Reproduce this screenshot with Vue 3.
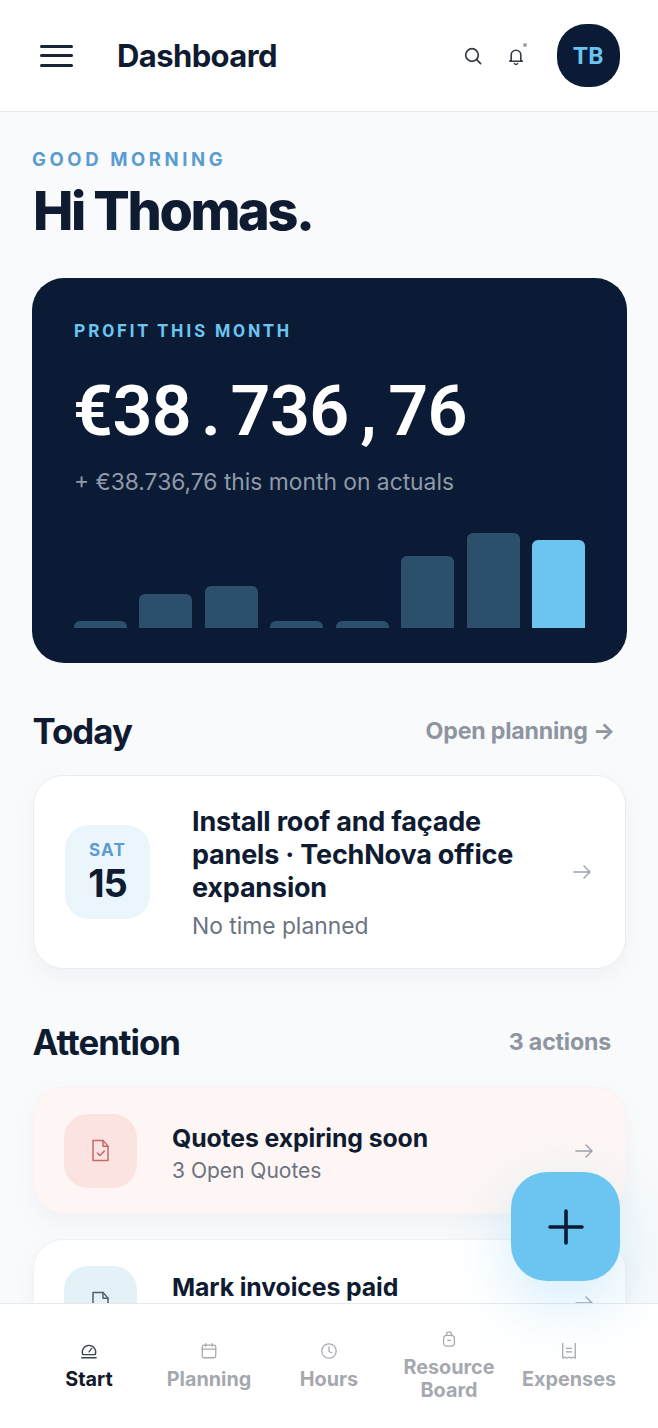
<script setup>
const amount = '€38.736,76'.split('')
const bars = [
  { h: 7 }, { h: 34 }, { h: 42 }, { h: 7 }, { h: 7 }, { h: 72 }, { h: 95 }, { h: 88, on: true }
]
</script>

<template>
  <div class="app">
    <header class="top">
      <button class="burger" aria-label="Menu"><i></i><i></i><i></i></button>
      <h1 class="title">Dashboard</h1>
      <div class="top-actions">
        <svg class="ic-search" viewBox="0 0 20 20" fill="none" stroke="#343b46" stroke-width="1.7" stroke-linecap="round">
          <circle cx="9" cy="9" r="6.3" /><path d="M13.7 13.7 17.6 17.6" />
        </svg>
        <span class="bell">
          <svg viewBox="0 0 20 20" fill="none" stroke="#343b46" stroke-width="1.6" stroke-linecap="round" stroke-linejoin="round">
            <path d="M5.2 14.2V9a4.8 4.8 0 0 1 9.6 0v5.2l1.4 1H3.800z" /><path d="M8.4 17.5a1.8 1.8 0 0 0 3.2 0" />
          </svg>
          <i class="dot"></i>
        </span>
        <div class="avatar">TB</div>
      </div>
    </header>

    <main class="main">
      <p class="eyebrow">GOOD MORNING</p>
      <h2 class="hello">Hi Thomas.</h2>

      <section class="profit">
        <p class="profit-label">PROFIT THIS MONTH</p>
        <p class="amount"><span v-for="(c, i) in amount" :key="i" class="ch">{{ c }}</span></p>
        <p class="profit-sub">+ €38.736,76 this month on actuals</p>
        <div class="chart">
          <span v-for="(b, i) in bars" :key="i" class="bar" :class="{ on: b.on }" :style="{ height: b.h + 'px' }"></span>
        </div>
      </section>

      <div class="sec-head first">
        <h3>Today</h3>
        <span class="sec-link link-plan">Open planning →</span>
      </div>
      <article class="card today">
        <div class="date"><span class="dow">SAT</span><span class="day">15</span></div>
        <div class="today-body">
          <div class="today-title">Install roof and façade panels · TechNova office expansion</div>
          <div class="today-sub">No time planned</div>
        </div>
        <svg class="arrow" viewBox="0 0 20 20" fill="none" stroke="#9aa1ab" stroke-width="1.4" stroke-linecap="round" stroke-linejoin="round">
          <path d="M2 10h16M12 4l6 6-6 6" />
        </svg>
      </article>

      <div class="sec-head second">
        <h3>Attention</h3>
        <span class="sec-link link-act">3 actions</span>
      </div>
      <article class="card action red">
        <div class="a-icon">
          <svg viewBox="0 0 20 20" fill="none" stroke="#c4696a" stroke-width="1.2" stroke-linecap="round" stroke-linejoin="round">
            <path d="M4 2h8l4 4.500V18H4z" /><path d="M12 2v4.500h4" /><path d="M7.500 12l2 2 3.500-3.500" />
          </svg>
        </div>
        <div class="a-body">
          <div class="a-title">Quotes expiring soon</div>
          <div class="a-sub">3 Open Quotes</div>
        </div>
        <svg class="arrow" viewBox="0 0 20 20" fill="none" stroke="#9aa1ab" stroke-width="1.4" stroke-linecap="round" stroke-linejoin="round">
          <path d="M2 10h16M12 4l6 6-6 6" />
        </svg>
      </article>
      <article class="card action blue">
        <div class="a-icon">
          <svg viewBox="0 0 20 20" fill="none" stroke="#51606f" stroke-width="1.2" stroke-linecap="round" stroke-linejoin="round">
            <path d="M4 2h8l4 4.500V18H4z" /><path d="M12 2v4.500h4" /><path d="M7 11h6M7 14h6" />
          </svg>
        </div>
        <div class="a-body">
          <div class="a-title">Mark invoices paid</div>
        </div>
        <svg class="arrow" viewBox="0 0 20 20" fill="none" stroke="#9aa1ab" stroke-width="1.4" stroke-linecap="round" stroke-linejoin="round">
          <path d="M2 10h16M12 4l6 6-6 6" />
        </svg>
      </article>
    </main>

    <nav class="nav">
      <div class="nav-item active">
        <svg viewBox="0 0 20 20" fill="none" stroke="#3a4350" stroke-width="1.4" stroke-linecap="round" stroke-linejoin="round">
          <path d="M3 14a7.500 7.500 0 1 1 14 0z" /><path d="M10 11l3-4" /><path d="M2 17.500h16" />
        </svg>
        <span>Start</span>
      </div>
      <div class="nav-item">
        <svg viewBox="0 0 20 20" fill="none" stroke="#a5a9af" stroke-width="1.4" stroke-linecap="round" stroke-linejoin="round">
          <rect x="2.500" y="3.500" width="15" height="14" rx="2" /><path d="M2.500 8h15M6.500 1.800v3M13.500 1.800v3" />
        </svg>
        <span>Planning</span>
      </div>
      <div class="nav-item">
        <svg viewBox="0 0 20 20" fill="none" stroke="#a5a9af" stroke-width="1.4" stroke-linecap="round" stroke-linejoin="round">
          <circle cx="10" cy="10" r="8" /><path d="M10 5.500V10.500l3 1.500" />
        </svg>
        <span>Hours</span>
      </div>
      <div class="nav-item">
        <svg viewBox="0 0 20 20" fill="none" stroke="#a5a9af" stroke-width="1.4" stroke-linecap="round" stroke-linejoin="round">
          <rect x="4" y="6" width="12" height="12" rx="3.500" /><path d="M7.200 6V4.800a2.800 2.800 0 0 1 5.600 0V6" /><path d="M8.500 11.500h3" />
        </svg>
        <span>Resource<br />Board</span>
      </div>
      <div class="nav-item">
        <svg viewBox="0 0 20 20" fill="none" stroke="#a5a9af" stroke-width="1.4" stroke-linecap="round" stroke-linejoin="round">
          <path d="M3 1.500V18l2.300-1.300L7.600 18 10 16.700 12.400 18l2.300-1.300L17 18V1.500" /><path d="M7 7h6M7 11h6" />
        </svg>
        <span>Expenses</span>
      </div>
    </nav>

    <button class="fab" aria-label="Add">
      <svg viewBox="0 0 36 36" fill="none" stroke="#0b1b35" stroke-width="3.6" stroke-linecap="round">
        <path d="M18 2v32M2 18h32" />
      </svg>
    </button>
  </div>
</template>

<style>
html, body { margin: 0; background: #f8fafc; }
</style>

<style scoped>
.app {
  position: relative;
  width: 658px;
  height: 1428px;
  display: flex;
  flex-direction: column;
  overflow: hidden;
  background: #f8fafc;
  font-family: Inter, "Liberation Sans", sans-serif;
  color: #0f1b30;
}
p, h1, h2, h3 { margin: 0; }

.top {
  flex: none;
  height: 111px;
  display: flex;
  align-items: center;
  padding: 0 38px 0 40px;
  background: #fff;
  border-bottom: 1px solid #e6eaee;
}
.burger {
  width: 33px;
  height: 22px;
  padding: 0;
  border: 0;
  background: none;
  display: flex;
  flex-direction: column;
  justify-content: space-between;
}
.burger i { display: block; height: 3px; border-radius: 2px; background: #1a2434; }
.title {
  margin-left: 44px;
  font-size: 31px;
  font-weight: 700;
  letter-spacing: -0.6px;
}
.top-actions { margin-left: auto; display: flex; align-items: center; }
.ic-search { width: 20px; height: 20px; }
.bell { position: relative; width: 20px; height: 20px; margin-left: 23px; }
.bell svg { display: block; width: 20px; height: 20px; }
.dot { position: absolute; top: -3px; right: -1px; width: 4px; height: 4px; border-radius: 50%; background: #9aa3ad; }
.avatar {
  width: 63px;
  height: 63px;
  margin-left: 31px;
  border-radius: 29px;
  background: #0b1b35;
  color: #6cc5f0;
  font-family: Roboto, sans-serif;
  font-size: 24px;
  font-weight: 700;
  letter-spacing: 0.5px;
  display: flex;
  align-items: center;
  justify-content: center;
}

.main { flex: 1; min-height: 0; overflow: hidden; padding: 0 31px 0 32px; }
.eyebrow {
  margin: 36px 0 0 0;
  font-size: 18.5px;
  line-height: 22px;
  font-weight: 700;
  letter-spacing: 3.6px;
  color: #5a9ccf;
}
.hello {
  margin: 8px 0 0 1px;
  font-size: 54px;
  line-height: 66px;
  font-weight: 800;
  letter-spacing: -2.4px;
}

.profit {
  margin-top: 34px;
  height: 385px;
  box-sizing: border-box;
  padding: 42px 42px 35px;
  border-radius: 32px;
  background: #0b1b35;
  display: flex;
  flex-direction: column;
}
.profit-label {
  font-family: Roboto, sans-serif;
  font-size: 17.5px;
  line-height: 22px;
  font-weight: 700;
  letter-spacing: 2.85px;
  color: #6cc5f0;
}
.amount {
  margin-top: 30px;
  margin-left: -1px;
  font-family: Roboto, sans-serif;
  font-size: 70px;
  line-height: 78px;
  font-weight: 600;
  color: #fff;
  display: flex;
}
.ch { display: block; width: 39.4px; text-align: center; }
.profit-sub {
  margin-top: 18px;
  font-size: 22.8px;
  line-height: 28px;
  color: #8f99a8;
}
.chart {
  margin-top: auto;
  display: grid;
  grid-template-columns: repeat(8, 1fr);
  gap: 12.5px;
  align-items: end;
  height: 95px;
}
.bar { display: block; border-radius: 6px 6px 0 0; background: #2c4f6b; }
.bar.on { background: #6cc5f0; }

.sec-head { display: flex; align-items: center; justify-content: space-between; padding: 0 1px 0 0.5px; }
.sec-head h3 { font-size: 34.8px; line-height: 42px; font-weight: 700; letter-spacing: -1px; }
.first { margin-top: 47px; }
.second { margin-top: 52px; }
.sec-link { font-size: 23.2px; font-weight: 700; color: #8e959f; letter-spacing: -0.2px; }
.link-plan { margin-right: 11px; }
.link-act { margin-right: 15px; }

.card {
  margin: 0 1px;
  box-sizing: border-box;
  display: flex;
  align-items: center;
  border-radius: 30px;
  border: 1px solid #e8edf2;
  background: #fff;
  box-shadow: 0 8px 24px rgba(15, 27, 48, 0.04);
}
.today { margin-top: 23px; height: 194px; padding: 0 33px 0 31px; }
.date {
  flex: none;
  width: 85px;
  height: 94px;
  border-radius: 24px;
  background: #eaf5fc;
  display: flex;
  flex-direction: column;
  align-items: center;
  justify-content: center;
}
.dow { font-size: 17px; line-height: 20px; font-weight: 700; letter-spacing: 1.2px; color: #5a9ccf; }
.day { margin-top: 1px; font-size: 38px; line-height: 44px; font-weight: 700; letter-spacing: -1px; }
.today-body { flex: 1; min-width: 0; margin-left: 42px; padding-right: 36px; }
.today-title { font-size: 27px; line-height: 33px; font-weight: 700; letter-spacing: -0.2px; }
.today-sub { margin-top: 8px; font-size: 22.8px; line-height: 28px; color: #6b7280; }
.arrow { flex: none; width: 20px; height: 20px; }

.action { height: 127px; padding: 0 31px 0 30px; border-color: #f4f2f1; }
.red { margin-top: 24px; background: #fdf6f4; border-color: #fbf3f1; }
.blue { margin-top: 25px; flex: none; }
.a-icon {
  flex: none;
  width: 73px;
  height: 74px;
  border-radius: 24px;
  display: flex;
  align-items: center;
  justify-content: center;
}
.a-icon svg { width: 25px; height: 25px; }
.red .a-icon { background: #fae3e1; }
.blue .a-icon { background: #e4f1f7; }
.a-body { flex: 1; min-width: 0; margin-left: 35px; padding-top: 5px; }
.blue .a-body { padding-bottom: 37px; }
.a-title { font-size: 24.8px; line-height: 30px; font-weight: 700; letter-spacing: -0.1px; }
.a-sub { margin-top: 5px; font-size: 21px; line-height: 26px; color: #6b7280; }

.nav {
  flex: none;
  height: 125px;
  box-sizing: border-box;
  padding: 0 29px;
  display: grid;
  grid-template-columns: repeat(5, 120px);
  align-items: center;
  background: #fff;
  border-top: 1px solid #e6eaee;
}
.nav-item {
  display: flex;
  flex-direction: column;
  align-items: center;
  text-align: center;
  font-size: 19.8px;
  line-height: 23px;
  font-weight: 700;
  color: #a5a9af;
}
.nav-item svg { width: 18px; height: 18px; margin-bottom: 8px; }
.nav-item.active { color: #111827; }

.fab {
  position: absolute;
  left: 511px;
  top: 1172px;
  width: 109px;
  height: 109px;
  padding: 0;
  border: 0;
  border-radius: 36px;
  background: #6cc5f0;
  box-shadow: 0 22px 60px rgba(108, 197, 240, 0.3);
  display: flex;
  align-items: center;
  justify-content: center;
}
.fab svg { width: 36px; height: 36px; }
</style>
